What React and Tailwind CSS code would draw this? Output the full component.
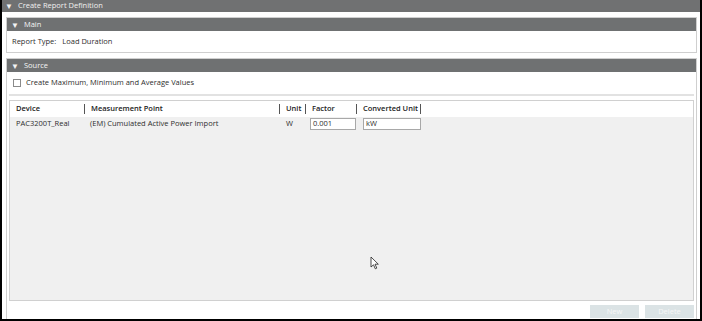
import React from 'react';

const FONT = { fontFamily: '"Open Sans", "Noto Sans", sans-serif' };

function SectionHeader({ title }) {
  return (
    <div className="flex h-[13px] items-center gap-[5px] bg-[#6f7172] pl-[4px] text-[7.5px] leading-none text-[#f4f4f4]">
      <span className="text-[8px]">▼</span>
      <span>{title}</span>
    </div>
  );
}

function ColHead({ label, width }) {
  return (
    <div className="flex h-full items-center" style={{ width }}>
      <span className="flex-1 whitespace-nowrap pl-[6px] font-semibold text-[#222]">{label}</span>
      <span className="h-[10px] w-px bg-[#555]" />
    </div>
  );
}

export default function App() {
  return (
    <div
      className="relative flex h-[321px] w-[702px] flex-col overflow-hidden border-x-2 border-b-2 border-black bg-white text-[7.5px] text-[#2e2e2e]"
      style={FONT}
    >
      {/* Top bar */}
      <div className="flex h-[12px] shrink-0 items-center gap-[5px] bg-[#707172] pl-[3px] leading-none text-[#f0f0f0]">
        <span className="text-[8px]">▼</span>
        <span>Create Report Definition</span>
      </div>

      <div className="flex flex-1 flex-col gap-[5px] pl-[4px] pr-[3px] pt-[5px]">
        {/* Main */}
        <div className="border border-[#cfcfcf]">
          <SectionHeader title="Main" />
          <div className="flex h-[21px] items-center gap-[6px] pl-[5px]">
            <span>Report Type:</span>
            <span>Load Duration</span>
          </div>
        </div>

        {/* Source */}
        <div className="flex flex-1 flex-col border-x border-t border-[#cfcfcf]">
          <SectionHeader title="Source" />
          <div className="flex h-[22px] items-center gap-[5px] pl-[6px]">
            <span className="h-[8px] w-[8px] border border-[#8a8a8a] bg-white" />
            <span>Create Maximum, Minimum and Average Values</span>
          </div>
          <div className="mx-[2px] h-[2px] bg-[#e2e2e2]" />

          <div className="mx-[2px] mt-[4px] flex h-[201px] flex-col border border-[#d0d0d0] bg-[#f0f0f0]">
            <div className="flex h-[16px] items-center bg-white">
              <ColHead label="Device" width={75} />
              <ColHead label="Measurement Point" width={195} />
              <ColHead label="Unit" width={26} />
              <ColHead label="Factor" width={51} />
              <ColHead label="Converted Unit" width={64} />
            </div>
            <div className="flex h-[14px] items-center">
              <span className="w-[75px] pl-[6px]">PAC3200T_Real</span>
              <span className="w-[195px] pl-[5px]">(EM) Cumulated Active Power Import</span>
              <span className="w-[26px] pl-[6px]">W</span>
              <div className="w-[51px] pl-[4px] pr-[1px]">
                <div className="flex h-[12px] items-center border border-[#a8a8a8] bg-white pl-[2px]">0.001</div>
              </div>
              <div className="w-[64px] pl-[6px]">
                <div className="flex h-[12px] items-center border border-[#a8a8a8] bg-white pl-[2px]">kW</div>
              </div>
            </div>
          </div>

          <div className="mt-[4px] flex justify-end gap-[6px] pr-[2px]">
            <button className="h-[13px] w-[49px] bg-[#dbe3e5] text-[7.5px] leading-none text-[#f7f7f7]">New</button>
            <button className="h-[13px] w-[49px] bg-[#dbe3e5] text-[7.5px] leading-none text-[#f7f7f7]">Delete</button>
          </div>
        </div>
      </div>

      {/* Mouse cursor */}
      <svg className="absolute left-[368px] top-[256px]" width="10" height="14" viewBox="0 0 10 14">
        <path d="M1 1 L1 11 L3.5 8.8 L5.3 12.8 L6.8 12.1 L5 8.2 L8.3 8.2 Z" fill="white" stroke="#222" strokeWidth="0.8" />
      </svg>
    </div>
  );
}
